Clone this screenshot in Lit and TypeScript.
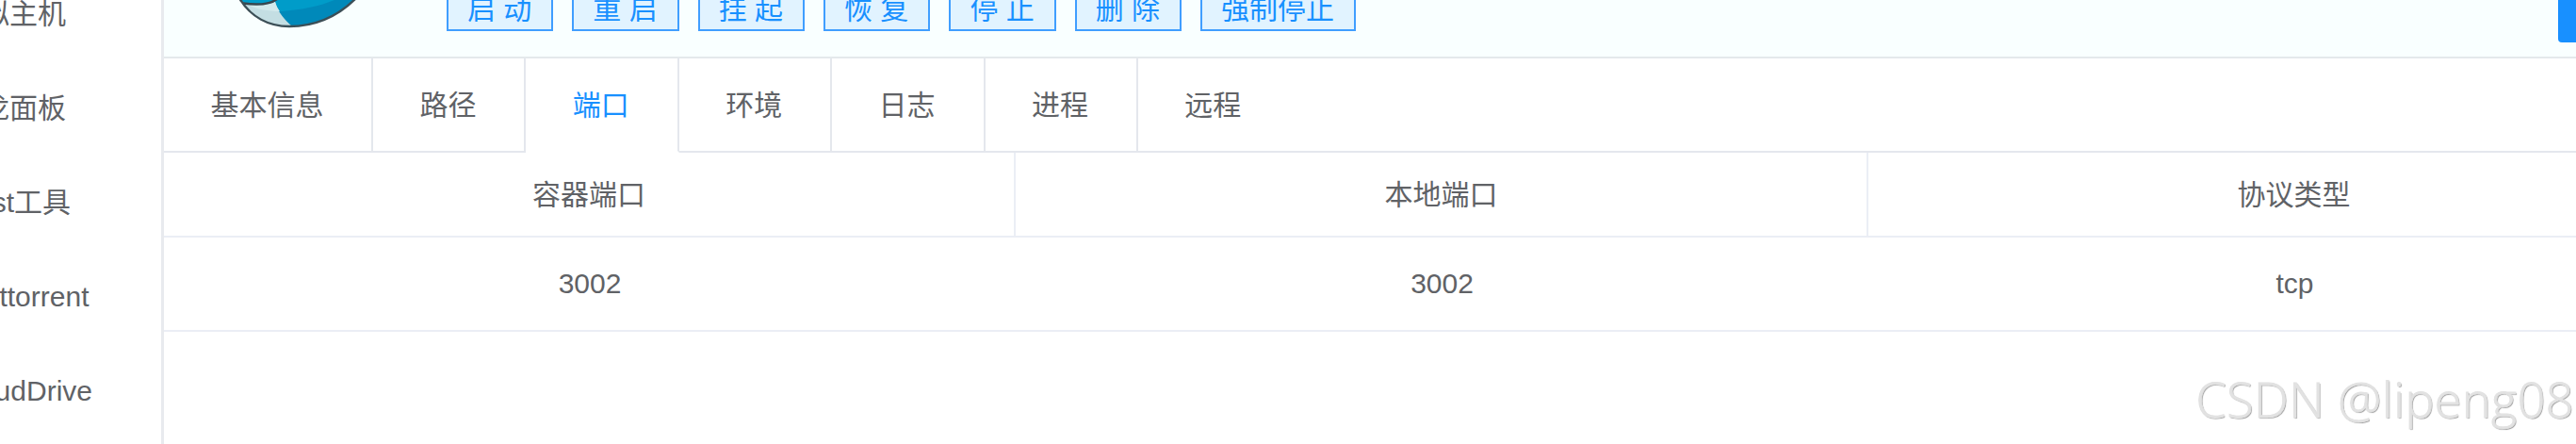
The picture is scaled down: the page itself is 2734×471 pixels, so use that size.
import { html, LitElement, css } from 'lit';
import { customElement, property, state } from 'lit/decorators.js';
import { classMap } from 'lit/directives/class-map.js';
import { styleMap } from 'lit/directives/style-map.js';

interface MenuItem {
  label: string;
  // right edge of the label inside the scrolled sidebar
  end: number;
}

interface PortRow {
  container: string;
  local: string;
  protocol: string;
}

@customElement('side-menu')
export class SideMenu extends LitElement {
  @property({ type: Array }) items: MenuItem[] = [];

  static styles = css`
    :host {
      display: block;
      box-sizing: border-box;
      width: 174px;
      height: 471px;
      overflow: hidden;
      border-right: 3px solid #e8eaee;
    }

    .menu {
      display: flex;
      flex-direction: column;
      margin-top: -35px;
    }

    .item {
      display: flex;
      justify-content: flex-end;
      height: 100px;
      line-height: 100px;
      white-space: nowrap;
    }
  `;

  render() {
    return html`
      <div class="menu">
        ${this.items.map(
          (item) => html`
            <div class="item" style=${styleMap({ width: `${item.end}px` })}>
              ${item.label}
            </div>
          `,
        )}
      </div>
    `;
  }
}

@customElement('container-header')
export class ContainerHeader extends LitElement {
  @property({ type: Array }) actions: string[] = [];

  static styles = css`
    :host {
      display: flex;
      align-items: flex-start;
      box-sizing: border-box;
      height: 62px;
      background: #f9ffff;
      border-bottom: 2px solid #e4e9ec;
      overflow: hidden;
    }

    .logo {
      width: 140px;
      height: 34px;
      margin-left: 71px;
      flex: none;
    }

    .actions {
      display: flex;
      gap: 20px;
      margin: -13px 0 0 89px;
    }

    .action {
      box-sizing: border-box;
      min-width: 113.3px;
      height: 46px;
      padding: 0 21px 0 20px;
      border: 2px solid #409eff;
      background: #e1f3ff;
      color: #1890ff;
      font: inherit;
      line-height: 42px;
      white-space: nowrap;
      text-align: center;
    }

    .primary {
      width: 60px;
      height: 60px;
      margin: -15px -41px 0 auto;
      flex: none;
      border-radius: 4px;
      background: #1890ff;
    }
  `;

  render() {
    return html`
      <svg class="logo" viewBox="0 0 140 34">
        <path d="M9 -2C21 18 40 28 62 28C88 28 113 18 133 -2Z" fill="#0089ba" />
        <path d="M46 -2C48 6 50 9 53 12C78 10 98 6 114 -2Z" fill="#009cc9" />
        <path
          d="M9 -2C21 18 40 28 65 28C57 21 50 13 47 2C38 6 26 5 15 4Z"
          fill="#c4dee3"
        />
        <path
          d="M18 5C30 6 40 5 47 2C48 6 50 9 52 12C40 12 28 10 18 5Z"
          fill="#d3e9ec"
        />
        <path d="M9 -2L14 3C28 5 40 4 48 -2Z" fill="#009cc9" />
        <path
          d="M13 3.5C28 5.5 42 4.5 49 -1"
          fill="none"
          stroke="#37474f"
          stroke-width="2.4"
        />
        <path
          d="M9 -2C21 18 40 28 62 28C88 28 113 18 133 -2"
          fill="none"
          stroke="#3c4f57"
          stroke-width="2.4"
        />
      </svg>
      <div class="actions">
        ${this.actions.map(
          (action) => html`<button class="action">${action}</button>`,
        )}
      </div>
      <div class="primary"></div>
    `;
  }
}

@customElement('detail-tabs')
export class DetailTabs extends LitElement {
  @property({ type: Array }) tabs: string[] = [];
  @property() active = '';

  private select(tab: string) {
    this.dispatchEvent(
      new CustomEvent('tab-change', {
        detail: { tab },
        bubbles: true,
        composed: true,
      }),
    );
  }

  static styles = css`
    :host {
      display: flex;
      height: 100px;
    }

    .tab {
      box-sizing: border-box;
      width: 162.4px;
      padding: 0 0 0 49.4px;
      border-right: 2px solid #e4e7ed;
      border-bottom: 2px solid #e4e7ed;
      line-height: 100px;
      white-space: nowrap;
      cursor: pointer;
    }

    .tab:first-child {
      width: 222px;
    }

    .tab.active {
      border-bottom-color: transparent;
      color: #1890ff;
    }

    .tab.last {
      border-right: none;
    }

    .rest {
      flex: 1;
      border-bottom: 2px solid #e4e7ed;
    }
  `;

  render() {
    return html`
      ${this.tabs.map(
        (tab, i) => html`
          <div
            class=${classMap({
              tab: true,
              active: tab === this.active,
              last: i === this.tabs.length - 1,
            })}
            @click=${() => this.select(tab)}
          >
            ${tab}
          </div>
        `,
      )}
      <div class="rest"></div>
    `;
  }
}

@customElement('port-table')
export class PortTable extends LitElement {
  @property({ type: Array }) rows: PortRow[] = [];

  static styles = css`
    :host {
      display: block;
      overflow: hidden;
    }

    .row {
      display: grid;
      grid-template-columns: 904px 905px 905px;
      height: 98px;
      border-bottom: 2px solid #ebeef5;
      text-align: center;
      line-height: 97px;
    }

    .head {
      height: 88px;
      line-height: 89px;
    }

    .head .cell {
      border-right: 2px solid #ebeef5;
    }
  `;

  render() {
    return html`
      <div class="row head">
        <div class="cell">容器端口</div>
        <div class="cell">本地端口</div>
        <div class="cell">协议类型</div>
      </div>
      ${this.rows.map(
        (row) => html`
          <div class="row">
            <div class="cell">${row.container}</div>
            <div class="cell">${row.local}</div>
            <div class="cell">${row.protocol}</div>
          </div>
        `,
      )}
    `;
  }
}

@customElement('app-root')
export class AppRoot extends LitElement {
  @state() private activeTab = '端口';

  private menu: MenuItem[] = [
    { label: '拟主机', end: 70 },
    { label: '龙面板', end: 70 },
    { label: 'st工具', end: 75 },
    { label: 'ttorrent', end: 94.5 },
    { label: 'oudDrive', end: 98 },
  ];

  private actions = [
    '启 动',
    '重 启',
    '挂 起',
    '恢 复',
    '停 止',
    '删 除',
    '强制停止',
  ];

  private tabs = ['基本信息', '路径', '端口', '环境', '日志', '进程', '远程'];

  private ports: PortRow[] = [
    { container: '3002', local: '3002', protocol: 'tcp' },
  ];

  static styles = css`
    :host {
      display: flex;
      position: relative;
      height: 471px;
      overflow: hidden;
      background: #fff;
      color: #606266;
      font-family: 'Liberation Sans', 'Noto Sans CJK SC', sans-serif;
      font-size: 30px;
    }

    side-menu {
      flex: none;
    }

    main {
      flex: 1;
      min-width: 0;
    }

    .watermark {
      position: absolute;
      right: 2px;
      bottom: 13px;
      color: #e2e2e2;
      font-family: 'Open Sans', sans-serif;
      font-size: 52px;
      font-weight: 300;
      letter-spacing: 0.5px;
      line-height: 70px;
      text-shadow: 1px 1px 1px #999;
      -webkit-text-stroke: 0.8px #e2e2e2;
      white-space: nowrap;
    }
  `;

  render() {
    return html`
      <side-menu .items=${this.menu}></side-menu>
      <main>
        <container-header .actions=${this.actions}></container-header>
        <detail-tabs
          .tabs=${this.tabs}
          .active=${this.activeTab}
          @tab-change=${(e: CustomEvent) => (this.activeTab = e.detail.tab)}
        ></detail-tabs>
        <port-table .rows=${this.ports}></port-table>
      </main>
      <div class="watermark">CSDN @lipeng08</div>
    `;
  }
}
